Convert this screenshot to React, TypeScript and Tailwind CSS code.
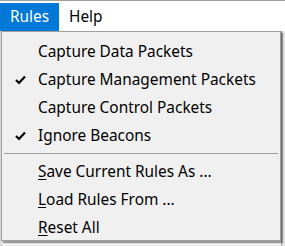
import React from 'react';

type Item = { label: string; checked?: boolean; accel?: number; sep?: boolean };

const items: Item[] = [
  { label: 'Capture Data Packets' },
  { label: 'Capture Management Packets', checked: true },
  { label: 'Capture Control Packets' },
  { label: 'Ignore Beacons', checked: true },
  { label: '', sep: true },
  { label: 'Save Current Rules As ...', accel: 0 },
  { label: 'Load Rules From ...', accel: 0 },
  { label: 'Reset All', accel: 0 },
];

function Check() {
  return (
    <svg width="11" height="10" viewBox="0 0 11 10" className="shrink-0">
      <path d="M1 5 L4 8 L10 1.5" fill="none" stroke="#000" strokeWidth="2.2" />
    </svg>
  );
}

function Label({ item }: { item: Item }) {
  if (item.accel === undefined) return <span>{item.label}</span>;
  const i = item.accel;
  return (
    <span>
      {item.label.slice(0, i)}
      <span className="underline underline-offset-2">{item.label[i]}</span>
      {item.label.slice(i + 1)}
    </span>
  );
}

export default function App() {
  return (
    <div
      className="relative w-[285px] h-[246px] overflow-hidden bg-white text-black"
      style={{ fontFamily: '"Noto Sans", "Open Sans", sans-serif' }}
    >
      <div className="h-px bg-[#a0a0a0]" />
      <div className="flex h-[30px] bg-white text-[15.4px] items-end">
        <div className="h-[28px] w-[59px] bg-[#0078d7] text-white flex items-center justify-center">Rules</div>
        <div className="h-[28px] px-[10px] flex items-center">Help</div>
      </div>
      <div className="h-[215px] bg-[#f0f0f0] flex">
        <div className="w-[2px] bg-[#d8d8d8]" />
        <div className="flex-1" />
        <div className="w-px bg-[#a0a0a0]" />
        <div className="w-[3px] bg-[#e4e4e4]" />
      </div>

      <div className="absolute left-[1px] top-[31px] w-[280px] h-[210px] overflow-hidden bg-[#f0f0f0] border border-[#a0a0a0] shadow-[2px_2px_1px_rgba(0,0,0,0.35)] pt-[6px] text-[15.4px]">
        {items.map((item, idx) =>
          item.sep ? (
            <div key={idx} className="h-[8px] pt-[3px] px-[2px]">
              <div className="h-px w-full bg-[#a0a0a0]" />
            </div>
          ) : (
            <div key={idx} className="h-[28px] flex items-center">
              <div className="w-[36px] flex justify-center pl-[1px]">{item.checked && <Check />}</div>
              <Label item={item} />
            </div>
          )
        )}
      </div>
    </div>
  );
}
